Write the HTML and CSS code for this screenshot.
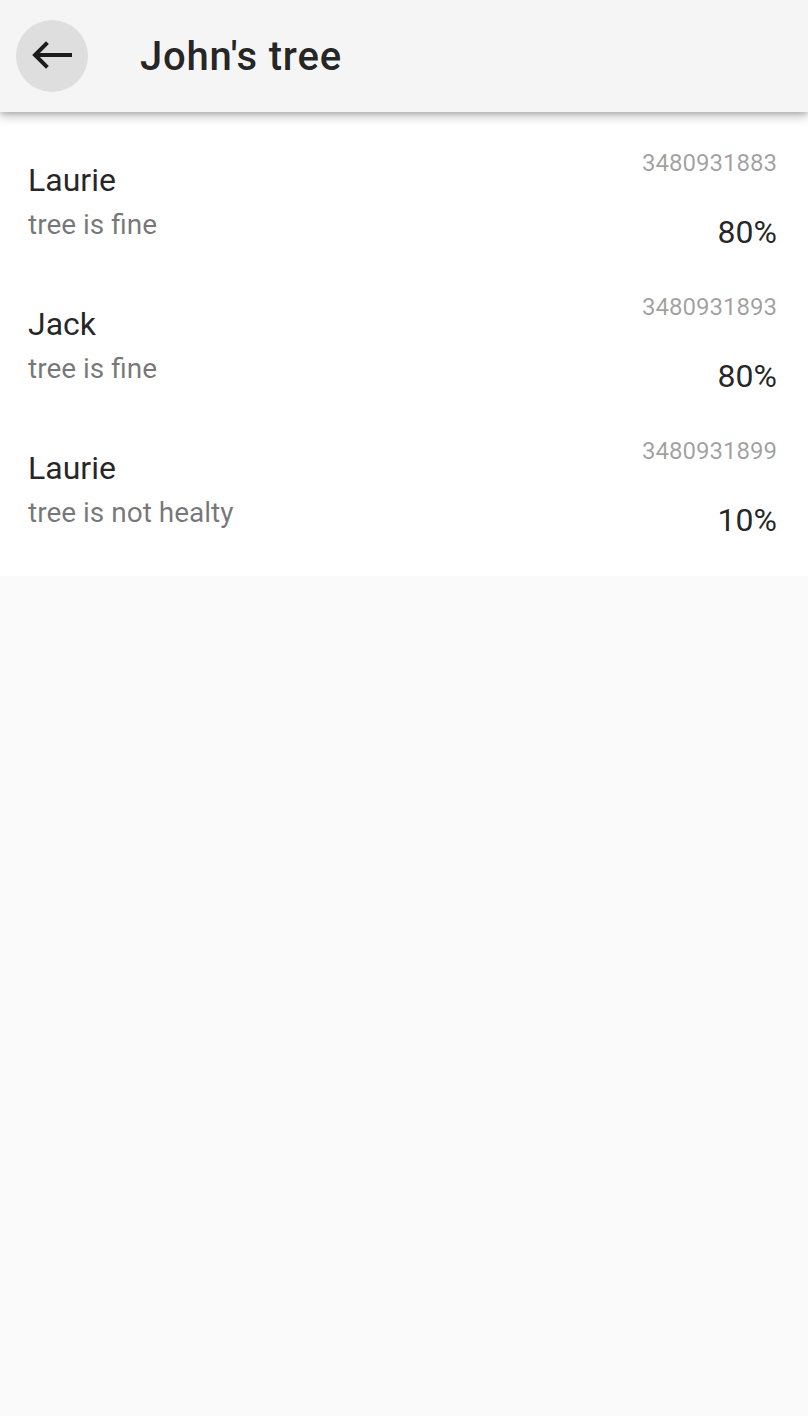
FILE: index.html
```html
<!DOCTYPE html>
<html>
<head>
<meta charset="utf-8">
<link rel="stylesheet" href="styles.css">
</head>
<body>
<header class="appbar">
  <button class="back" aria-label="Back">
    <svg viewBox="0 0 72 72" width="72" height="72"><path d="M54 35H20M30 24L19 35L30 46" fill="none" stroke="#1c1c1c" stroke-width="4" stroke-linecap="square" stroke-linejoin="miter"/></svg>
  </button>
  <h1 class="title">John's tree</h1>
</header>
<ul class="list">
  <li class="item">
    <div class="main">
      <div class="primary">Laurie</div>
      <div class="secondary">tree is fine</div>
    </div>
    <div class="meta">
      <div class="code">3480931883</div>
      <div class="pct">80%</div>
    </div>
  </li>
  <li class="item">
    <div class="main">
      <div class="primary">Jack</div>
      <div class="secondary">tree is fine</div>
    </div>
    <div class="meta">
      <div class="code">3480931893</div>
      <div class="pct">80%</div>
    </div>
  </li>
  <li class="item">
    <div class="main">
      <div class="primary">Laurie</div>
      <div class="secondary">tree is not healty</div>
    </div>
    <div class="meta">
      <div class="code">3480931899</div>
      <div class="pct">10%</div>
    </div>
  </li>
</ul>
</body>
</html>
```
FILE: styles.css
```css
* { box-sizing: border-box; }
html, body {
  margin: 0;
  padding: 0;
  background: #fafafa;
  font-family: Roboto, "Liberation Sans", sans-serif;
  color: rgba(0,0,0,0.87);
}
.appbar {
  position: relative;
  z-index: 2;
  height: 112px;
  background: #f5f5f5;
  display: flex;
  align-items: center;
  padding: 0 16px;
  box-shadow: 0 4px 10px rgba(0,0,0,0.25), 0 2px 4px rgba(0,0,0,0.12);
}
.back {
  width: 72px;
  height: 72px;
  border-radius: 50%;
  border: none;
  background: #dedede;
  display: flex;
  align-items: center;
  justify-content: center;
  padding: 0;
  margin: 0;
}
.title {
  margin: 0 0 0 52px;
  font-size: 40px;
  font-weight: 500;
  letter-spacing: 0.8px;
  color: rgba(0,0,0,0.87);
}
.list {
  list-style: none;
  margin: 0;
  padding: 16px 0;
  background: #fff;
}
.item {
  height: 144px;
  padding: 22px 31px 20px 28px;
  display: flex;
  justify-content: space-between;
  align-items: stretch;
}
.main {
  display: flex;
  flex-direction: column;
  justify-content: center;
}
.primary {
  font-size: 32px;
  line-height: 44px;
  color: rgba(0,0,0,0.87);
}
.secondary {
  margin-top: 3px;
  font-size: 28px;
  line-height: 40px;
  color: rgba(0,0,0,0.54);
}
.meta {
  display: flex;
  flex-direction: column;
  justify-content: space-between;
  align-items: flex-end;
}
.code {
  margin-top: -1px;
  font-size: 24px;
  line-height: 28px;
  color: rgba(0,0,0,0.38);
}
.pct {
  font-size: 32px;
  line-height: 40px;
  color: rgba(0,0,0,0.87);
}
```
